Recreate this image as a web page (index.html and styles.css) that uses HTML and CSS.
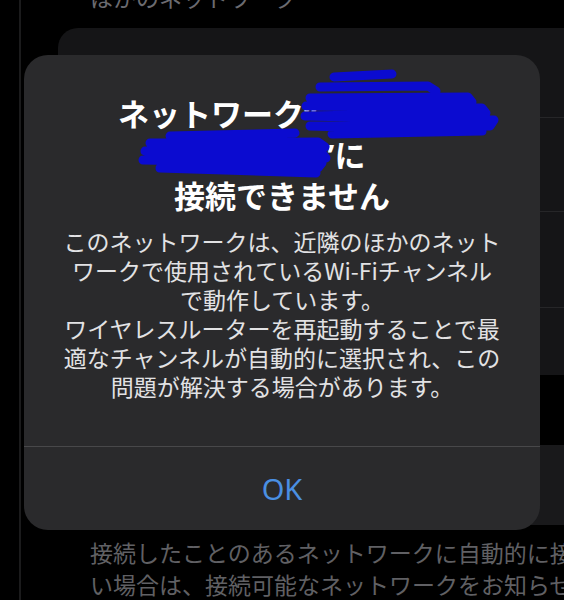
FILE: index.html
```html
<!DOCTYPE html>
<html lang="ja">
<head>
<meta charset="utf-8">
<title>Wi-Fi</title>
<link rel="stylesheet" href="styles.css">
</head>
<body>
<div class="screen">
  <div class="section-header">ほかのネットワーク</div>
  <div class="card card-networks">
    <div class="row row-1"></div>
    <div class="row row-2"></div>
    <div class="row row-3"></div>
    <div class="row row-4"></div>
  </div>
  <div class="card card-auto"></div>
  <p class="footer">接続したことのあるネットワークに自動的に接続されます。<br>い場合は、接続可能なネットワークをお知らせします。</p>
</div>

<div class="dialog">
  <div class="dialog-content">
    <h1 class="title">ネットワーク<span class="quote">“</span><span class="redact redact-1"></span><br><span class="redact redact-2"></span><span class="quote">”</span>に<br>接続できません</h1>
    <p class="message">このネットワークは、近隣のほかのネット<br>ワークで使用されているWi-Fiチャンネル<br>で動作しています。<br>ワイヤレスルーターを再起動することで最<br>適なチャンネルが自動的に選択され、この<br>問題が解決する場合があります。</p>
  </div>
  <div class="dialog-actions"><span class="ok">OK</span></div>
  <svg class="scribble" viewBox="24 55 516 200" width="516" height="200" aria-hidden="true">
    <g fill="none" stroke="#0b0bd0" stroke-width="9" stroke-linecap="round" stroke-linejoin="round">
      <path d="M334 77 L392 74 M320 87 L428 86 L436 91 M310 98 L468 97 L472 102 L306 106 L482 108 L486 113 L305 116 L494 120 L490 126 L310 126 L482 131 L332 134"/>
      <path d="M170 136 L295 133 M150 143 L318 142 L325 147 L145 151 L322 153 L326 158 L143 160 L322 163 L318 168 L160 168 L316 173"/>
    </g>
  </svg>
</div>
</body>
</html>
```

FILE: styles.css
```css
html, body {
  margin: 0;
  padding: 0;
}

body {
  width: 564px;
  height: 600px;
  overflow: hidden;
  position: relative;
  background: #000;
  font-family: "Noto Sans CJK JP", "Noto Sans", sans-serif;
}

.screen {
  display: flex;
  flex-direction: column;
  margin-left: 19px;
  border-left: 2px solid #1b1b1c;
  height: 600px;
  padding-left: 37px;
}

.section-header {
  margin-top: -18px;
  padding-left: 32px;
  font-size: 23px;
  line-height: 30px;
  color: #6b6b70;
  white-space: nowrap;
}

.card {
  background: #151517;
  border-radius: 20px 0 0 20px;
}

.card-networks {
  margin-top: 16px;
  height: 365px;
  display: flex;
  flex-direction: column;
}

.row {
  box-sizing: border-box;
  margin-left: 60px;
}

.row:not(:last-child) {
  border-bottom: 1px solid #262628;
}

.row-1 { height: 90px; }
.row-2 { height: 94px; }
.row-3 { height: 96px; }
.row-4 { flex: 1; }

.card-auto {
  margin-top: 70px;
  height: 84px;
  background: #19191b;
}

.footer {
  margin: 11px 0 0;
  padding-left: 32px;
  font-size: 23px;
  line-height: 32px;
  color: #606064;
  white-space: nowrap;
}

.dialog {
  position: absolute;
  left: 24px;
  top: 55px;
  width: 516px;
  height: 475px;
  border-radius: 24px;
  background: #2a2a2c;
  display: flex;
  flex-direction: column;
  overflow: hidden;
}

.dialog-content {
  flex: 1;
  padding: 37px 16px 0;
  text-align: center;
}

.title {
  margin: 0;
  font-size: 31px;
  line-height: 41px;
  font-weight: 700;
  color: #fff;
  white-space: nowrap;
}

.quote {
  font-family: "Noto Sans", sans-serif;
  line-height: 1;
}

.redact {
  display: inline-block;
  height: 1px;
}

.redact-1 { width: 128px; }
.redact-2 { width: 122px; }

.message {
  margin: 12px 0 0;
  font-size: 23px;
  line-height: 29px;
  color: #e2e2e4;
  white-space: nowrap;
}

.dialog-actions {
  box-sizing: border-box;
  height: 84px;
  border-top: 1px solid #48484a;
  display: flex;
  align-items: center;
  justify-content: center;
}

.ok {
  font-family: "Noto Sans", sans-serif;
  font-size: 29px;
  color: #4a8fe3;
}

.scribble {
  position: absolute;
  left: 0;
  top: 0;
  pointer-events: none;
}
```
